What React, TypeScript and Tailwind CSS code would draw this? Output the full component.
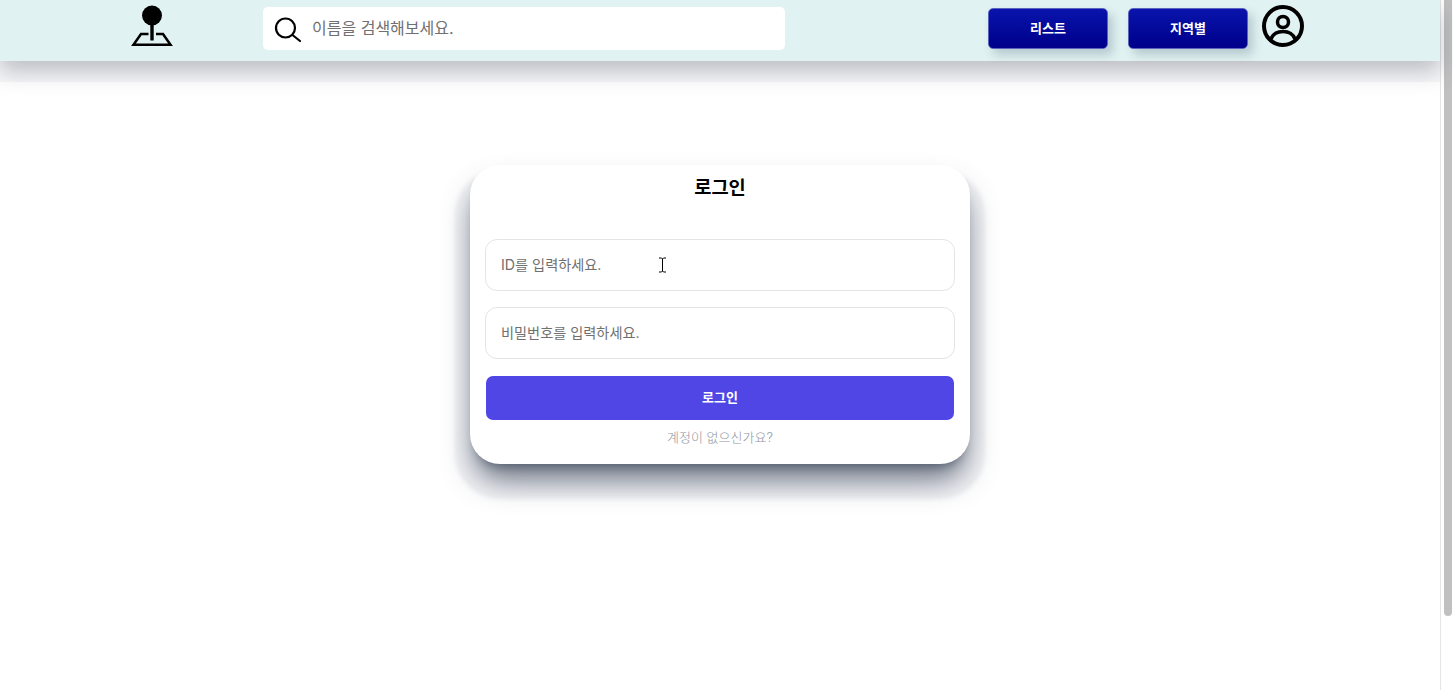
const font = "[font-family:Inter,'Noto_Sans_CJK_KR',sans-serif]";

function Logo() {
  return (
    <svg width="42" height="48" viewBox="0 0 42 48" fill="none" stroke="black">
      <circle cx="21" cy="15.5" r="10" fill="black" stroke="none" />
      <path d="M21 24V40.5" strokeWidth="3.4" />
      <path d="M17.5 34H10L2.5 44.7H39.5L32 34H25" strokeWidth="2.5" />
    </svg>
  );
}

function SearchIcon() {
  return (
    <svg className="shrink-0" width="28" height="28" viewBox="0 0 28 28" fill="none" stroke="black" strokeWidth="2.2">
      <circle cx="11.5" cy="13" r="9.5" />
      <path d="M18.5 20L26 26" strokeLinecap="round" />
    </svg>
  );
}

function UserIcon() {
  return (
    <svg width="44" height="44" viewBox="0 0 44 44" fill="none" stroke="black" strokeWidth="4">
      <circle cx="22" cy="22" r="19" />
      <circle cx="22" cy="18" r="5.5" strokeWidth="3.5" />
      <path d="M10 35C12 30 16 27.5 22 27.5C28 27.5 32 30 34 35" strokeWidth="3.5" />
    </svg>
  );
}

function IBeam() {
  return (
    <svg className="absolute left-[173px] top-[18px]" width="9" height="16" viewBox="0 0 9 16" fill="none" stroke="black" strokeWidth="1">
      <path d="M1 1H3.5L4.5 2L5.5 1H8M4.5 2V14M1 15H3.5L4.5 14L5.5 15H8" />
    </svg>
  );
}

function NavButton({ label }: { label: string }) {
  return (
    <button className="w-[120px] h-[41px] rounded-[5px] border border-[#5a62c0] bg-gradient-to-b from-[#0a14ac] to-[#00008a] text-white text-[13px] font-bold shadow-[5px_6px_10px_rgba(90,110,130,0.3)]">
      {label}
    </button>
  );
}

export default function App() {
  return (
    <div className={`flex h-[690px] overflow-hidden bg-white ${font}`}>
      <div className="w-[1440px] shrink-0">
        <header className="h-[61px] bg-[#e0f2f1] flex items-start shadow-[0_10px_22px_rgba(70,75,95,0.34),0_21px_0_#f7f7f9] relative">
          <div className="ml-[131px] w-[42px]">
            <Logo />
          </div>
          <div className="ml-[90px] mt-[7px] w-[522px] h-[43px] bg-white rounded-[5px] flex items-center pl-[11px]">
            <SearchIcon />
            <input
              className="ml-[10px] flex-1 h-[42px] mb-px outline-none text-[16px] placeholder:text-[#707070]"
              placeholder="이름을 검색해보세요."
            />
          </div>
          <div className="ml-[203px] mt-[8px]">
            <NavButton label="리스트" />
          </div>
          <div className="ml-[20px] mt-[8px]">
            <NavButton label="지역별" />
          </div>
          <div className="ml-[13px] mt-[4px]">
            <UserIcon />
          </div>
        </header>

        <main className="flex justify-center pt-[104px]">
          <div className="w-[500px] h-[299px] rounded-[30px] bg-white px-[15px] shadow-[0_20px_30px_-5px_rgba(55,65,85,0.75),0_8px_10px_-6px_rgba(55,65,85,0.5),0_20px_4px_15px_#f2f3f5]">
            <h1 className="text-center text-[18.7px] font-bold text-black leading-[28px] mt-[9px]">로그인</h1>
            <div className="relative mt-[37px]">
              <input
                className="w-full h-[52px] rounded-[12px] border border-[#e2e4e8] px-[15px] pb-[2px] outline-none text-[14.2px] placeholder:text-[#707070]"
                placeholder="ID를 입력하세요."
              />
              <IBeam />
            </div>
            <input
              className="block w-full mt-[16px] h-[52px] rounded-[12px] border border-[#e2e4e8] px-[15px] pb-[2px] outline-none text-[14.2px] placeholder:text-[#707070]"
              placeholder="비밀번호를 입력하세요."
            />
            <button className="block mt-[17px] mx-px w-[468px] h-[44px] rounded-[7px] bg-[#4f46e5] text-white text-[13px] font-semibold">
              로그인
            </button>
            <p className="mt-[8px] text-center text-[13px] leading-[18px] font-light text-[#8f95a0]">계정이 없으신가요?</p>
          </div>
        </main>
      </div>
      <aside className="flex-1 border-l border-[#e5e5e5] pl-[3px]">
        <div className="w-[8px] h-[616px] rounded-b-[4px] bg-[#c0c0c0]" />
      </aside>
    </div>
  );
}
